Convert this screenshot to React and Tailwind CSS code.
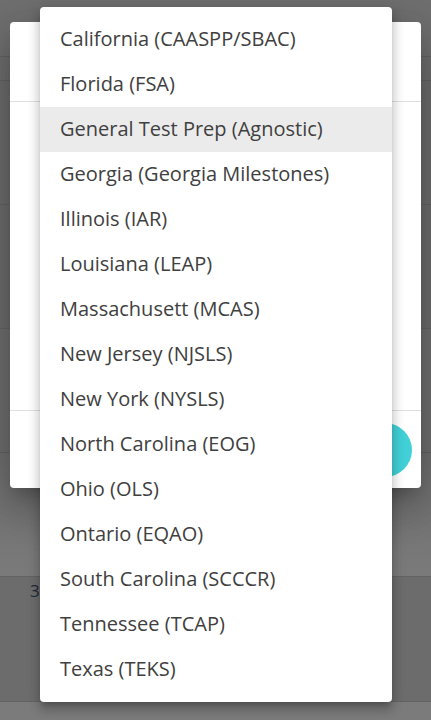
import React from 'react';

const OPTIONS = [
  'California (CAASPP/SBAC)',
  'Florida (FSA)',
  'General Test Prep (Agnostic)',
  'Georgia (Georgia Milestones)',
  'Illinois (IAR)',
  'Louisiana (LEAP)',
  'Massachusett (MCAS)',
  'New Jersey (NJSLS)',
  'New York (NYSLS)',
  'North Carolina (EOG)',
  'Ohio (OLS)',
  'Ontario (EQAO)',
  'South Carolina (SCCCR)',
  'Tennessee (TCAP)',
  'Texas (TEKS)',
];

// Page rows behind the backdrop
const Background = () => (
  <div className="flex flex-col">
    <div className="h-[57px] bg-[#6f6f6f] border-b border-[#636363]" />
    <div className="h-[24px] bg-[#6d6d6d] border-b border-[#636363]" />
    <div className="h-[124px] bg-[#6c6c6c] border-b border-[#636363]" />
    <div className="h-[124px] bg-[#6c6c6c] border-b border-[#636363]" />
    <div className="h-[124px] bg-[#6e6e6e] border-b border-[#636363]" />
    <div className="h-[124px] bg-gradient-to-b from-[#6f6f6f] to-[#7a7a7a] border-b border-[#636363]" />
    <div className="h-[125px] bg-[#6c6c6c] border-b border-[#636363] flex">
      <span className="ml-[30px] mt-[5px] text-[17px] text-[#1f2937] leading-none" style={{ fontFamily: '"Open Sans", sans-serif' }}>
        3
      </span>
    </div>
    <div className="h-[20px] bg-[#7b7b7b]" />
  </div>
);

// Dialog sitting under the open menu
const Dialog = () => (
  <div className="absolute left-[10px] top-[22px] w-[411px] h-[466px] bg-white rounded-[4px] shadow-[0_11px_15px_-7px_rgba(0,0,0,0.2),0_24px_38px_3px_rgba(0,0,0,0.14),0_9px_46px_8px_rgba(0,0,0,0.12)] flex flex-col">
    <div className="h-[80px] border-b border-[#e0e0e0]" />
    <div className="h-[309px] border-b border-[#e0e0e0]" />
    <div className="flex-1 flex justify-end items-center pr-[9px]">
      <div className="w-[54px] h-[54px] rounded-full bg-[#40d0d6]" />
    </div>
  </div>
);

const Menu = () => (
  <div
    className="absolute left-[40px] top-[7px] w-[352px] bg-white rounded-[4px] py-[10px] shadow-[0_5px_5px_-3px_rgba(0,0,0,0.2),0_8px_10px_1px_rgba(0,0,0,0.14),0_3px_14px_2px_rgba(0,0,0,0.12)]"
    style={{ fontFamily: '"Open Sans", sans-serif' }}
  >
    {OPTIONS.map((opt, i) => (
      <div
        key={opt}
        className={`h-[45px] flex items-center pl-[20px] pb-[2px] text-[20px] text-[#404040] ${
          i === 2 ? 'bg-[#ebebeb]' : ''
        }`}
      >
        {opt}
      </div>
    ))}
  </div>
);

export default function App() {
  return (
    <div className="relative w-[431px] h-[720px] overflow-hidden bg-[#6e6e6e]">
      <Background />
      <Dialog />
      <Menu />
    </div>
  );
}
